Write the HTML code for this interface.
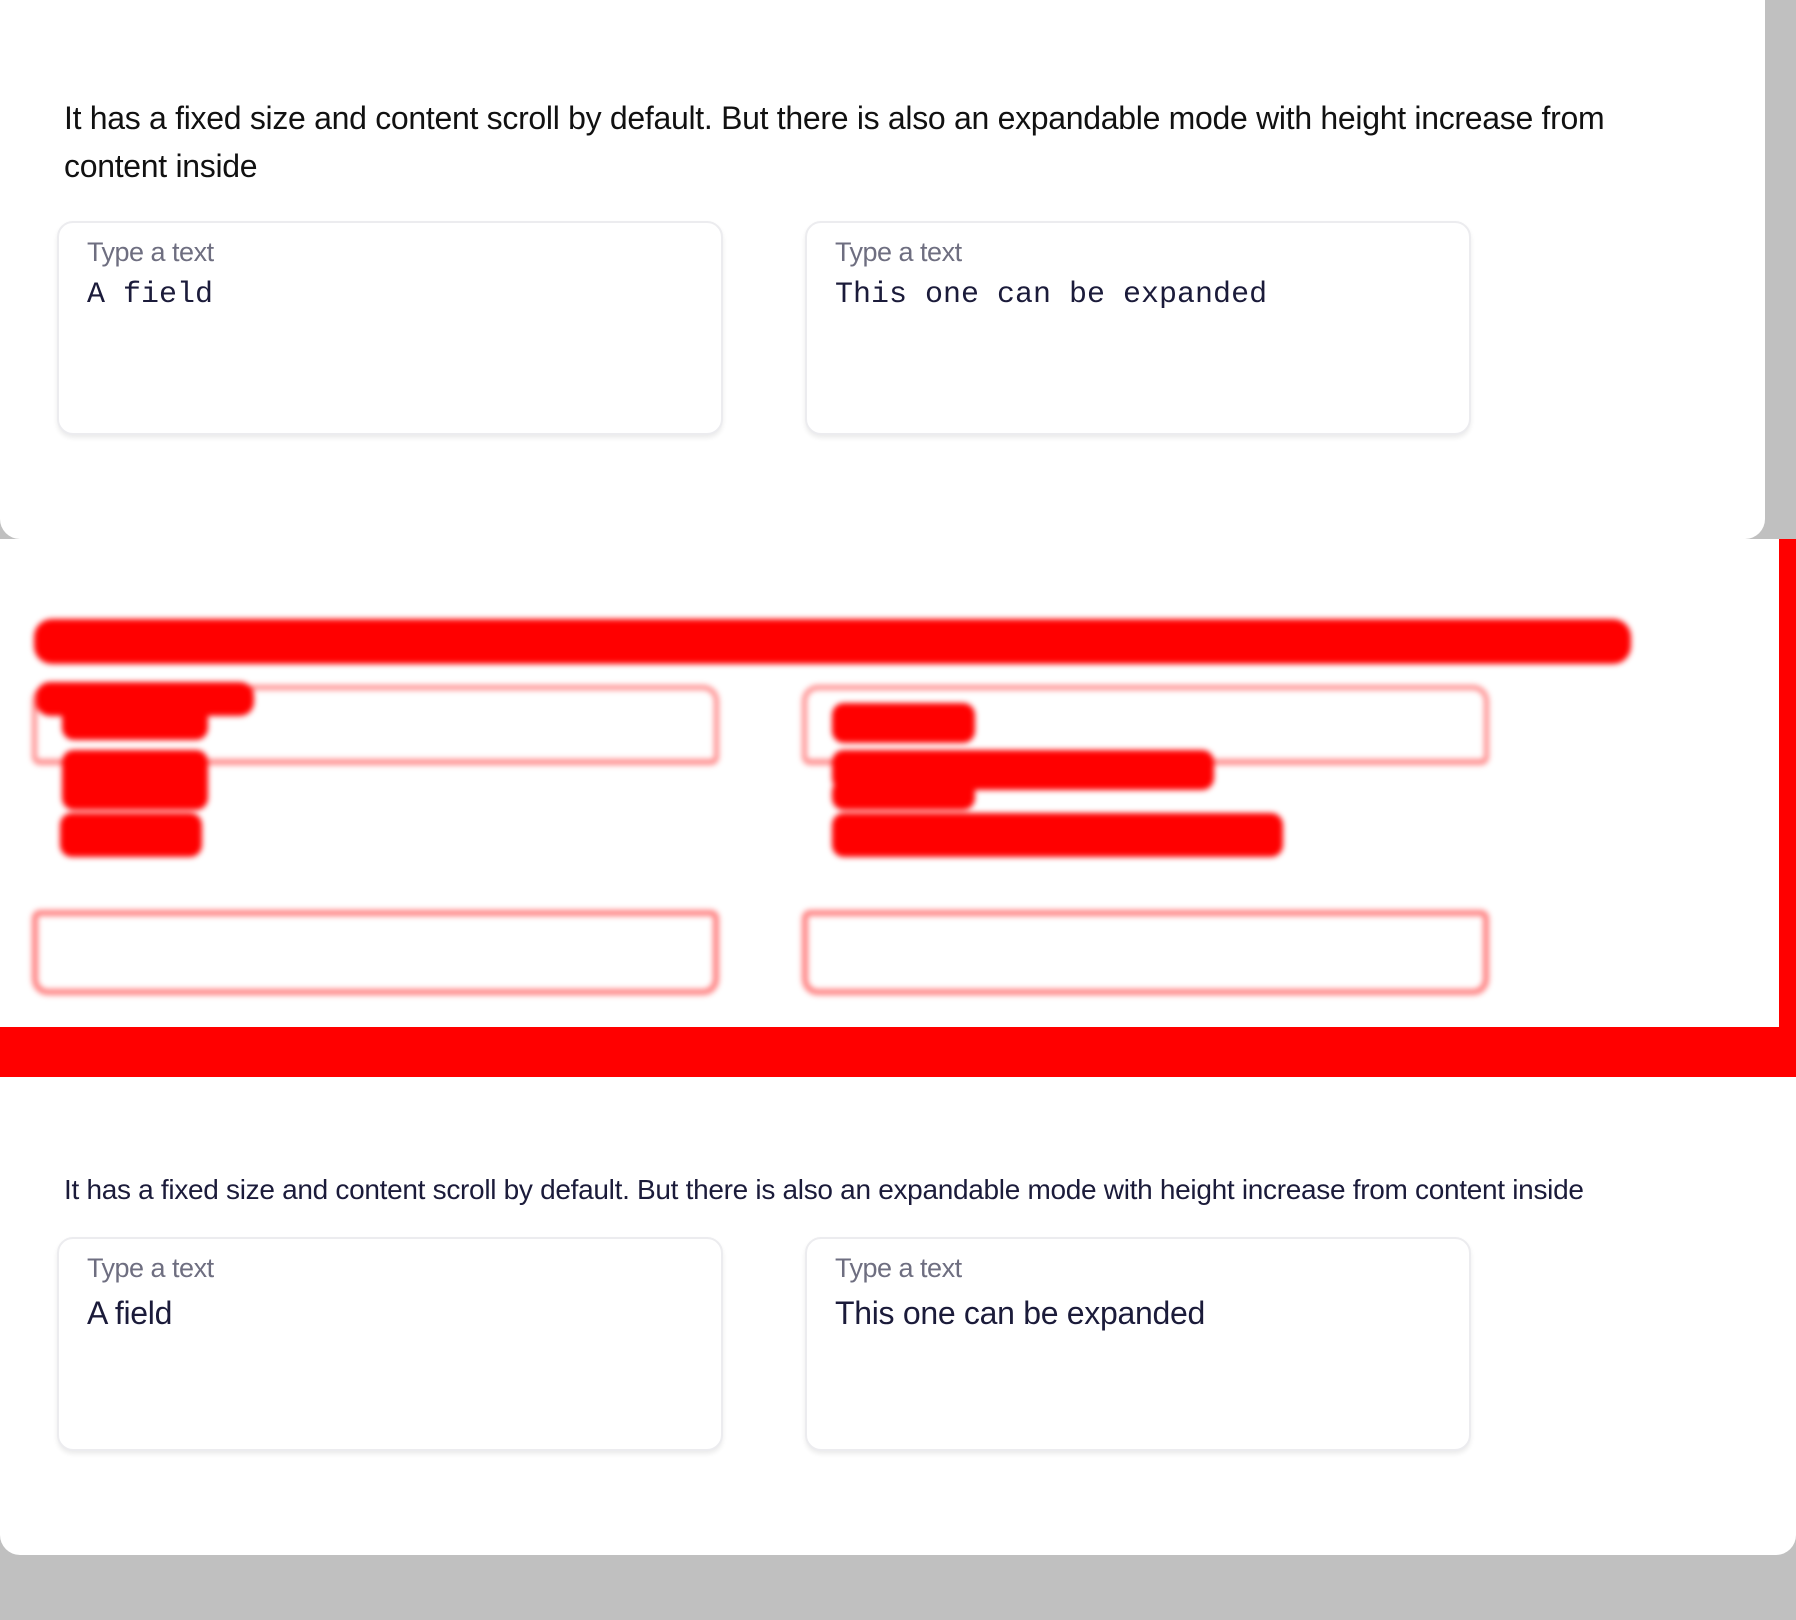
<!DOCTYPE html>
<html><head><meta charset="utf-8">
<style>
*{margin:0;padding:0;box-sizing:border-box}
html,body{width:1796px;height:1620px;overflow:hidden;background:#c0c0c0;font-family:"Liberation Sans",sans-serif}
.panel{position:absolute;background:#fff}
.p{position:absolute;left:64px;white-space:nowrap;color:#111}
.box{position:absolute;background:#fff;border:2px solid #ececef;border-radius:16px;box-shadow:0 3px 5px rgba(0,0,0,.08)}
.lbl{position:absolute;left:28px;top:14px;font-size:27px;color:#6e6e80;letter-spacing:-0.5px}
.val{position:absolute;left:28px;color:#1b1b3a}
.mono{font-family:"Liberation Mono",monospace;font-size:30px;top:55px}
.sans{font-size:32px;top:56px;letter-spacing:-0.3px}
.red{position:absolute;background:#ff0000}
.blur{filter:blur(3px)}
</style></head><body>
<div class="panel" style="left:0;top:0;width:1765px;height:539px;border-radius:0 0 20px 20px"></div>
<div class="p" style="top:100px;font-size:32px;letter-spacing:-0.3px">It has a fixed size and content scroll by default. But there is also an expandable mode with height increase from</div>
<div class="p" style="top:148px;font-size:32px;letter-spacing:-0.3px">content inside</div>
<div class="box" style="left:57px;top:221px;width:666px;height:214px"><div class="lbl">Type a text</div><div class="val mono">A field</div></div>
<div class="box" style="left:805px;top:221px;width:666px;height:214px"><div class="lbl">Type a text</div><div class="val mono">This one can be expanded</div></div>

<div class="panel" style="left:0;top:539px;width:1779px;height:488px"></div>
<div class="red" style="left:1779px;top:539px;width:17px;height:538px"></div>
<div class="red" style="left:0;top:1027px;width:1796px;height:50px"></div>
<div class="blur">
<div class="red" style="left:34px;top:619px;width:1597px;height:45px;border-radius:18px"></div>
<div class="red" style="left:36px;top:682px;width:218px;height:34px;border-radius:14px"></div>
<div class="red" style="left:62px;top:700px;width:146px;height:40px;border-radius:12px"></div>
<div class="red" style="left:62px;top:750px;width:146px;height:60px;border-radius:12px"></div>
<div class="red" style="left:60px;top:813px;width:142px;height:44px;border-radius:12px"></div>
<div class="red" style="left:832px;top:703px;width:143px;height:40px;border-radius:12px"></div>
<div class="red" style="left:832px;top:750px;width:382px;height:40px;border-radius:12px"></div>
<div class="red" style="left:832px;top:780px;width:143px;height:30px;border-radius:12px"></div>
<div class="red" style="left:832px;top:813px;width:451px;height:44px;border-radius:12px"></div>
<div style="position:absolute;left:32px;top:685px;width:687px;height:80px;border:5px solid rgba(255,0,0,.45);border-bottom-width:6px;border-radius:16px 16px 8px 8px"></div>
<div style="position:absolute;left:32px;top:910px;width:687px;height:85px;border:6px solid rgba(255,0,0,.5);border-radius:8px 8px 16px 16px"></div>
<div style="position:absolute;left:802px;top:685px;width:687px;height:80px;border:5px solid rgba(255,0,0,.45);border-bottom-width:6px;border-radius:16px 16px 8px 8px"></div>
<div style="position:absolute;left:802px;top:910px;width:687px;height:85px;border:6px solid rgba(255,0,0,.5);border-radius:8px 8px 16px 16px"></div>
</div>

<div class="panel" style="left:0;top:1077px;width:1796px;height:478px;border-radius:0 0 20px 20px"></div>
<div class="p" style="top:1174px;font-size:28px;letter-spacing:-0.3px;color:#1b1b3a">It has a fixed size and content scroll by default. But there is also an expandable mode with height increase from content inside</div>
<div class="box" style="left:57px;top:1237px;width:666px;height:214px"><div class="lbl">Type a text</div><div class="val sans">A field</div></div>
<div class="box" style="left:805px;top:1237px;width:666px;height:214px"><div class="lbl">Type a text</div><div class="val sans">This one can be expanded</div></div>
</body></html>
